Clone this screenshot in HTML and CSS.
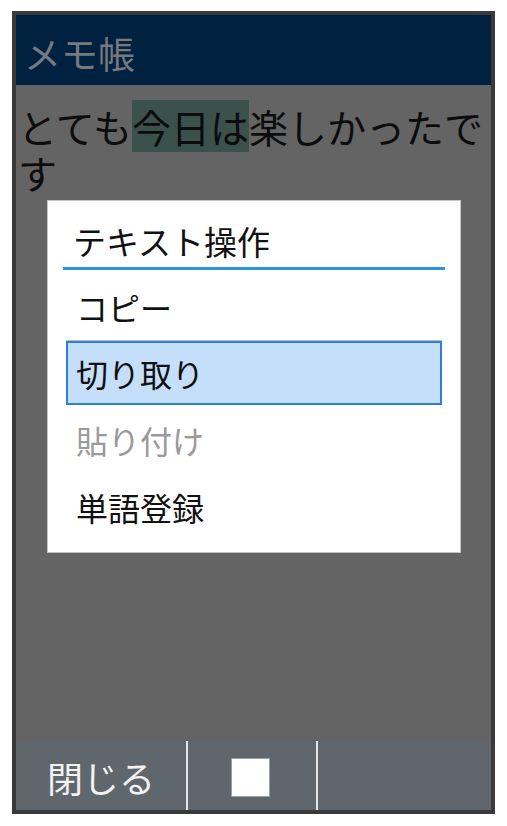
FILE: index.html
```html
<!DOCTYPE html>
<html lang="ja">
<head>
<meta charset="utf-8">
<link rel="stylesheet" href="styles.css">
</head>
<body>
<div class="phone">
  <header class="appbar">メモ帳</header>
  <main class="content">
    <p class="memo">とても<span class="sel">今日は</span>楽しかったです</p>
    <div class="dialog">
      <div class="dialog-title">テキスト操作</div>
      <ul class="menu">
        <li class="item sep">コピー</li>
        <li class="item focus">切り取り</li>
        <li class="item disabled">貼り付け</li>
        <li class="item">単語登録</li>
      </ul>
    </div>
  </main>
  <footer class="softkeys">
    <div class="key key-left">閉じる</div>
    <div class="key key-center"><span class="square"></span></div>
    <div class="key key-right"></div>
  </footer>
</div>
</body>
</html>
```

FILE: styles.css
```css
* { box-sizing: border-box; }
html, body { margin: 0; padding: 0; background: #ffffff; }
body {
  font-family: "Noto Sans CJK JP", "Noto Sans", sans-serif;
  padding: 11px 12px 0 12px;
}
.phone {
  width: 483px;
  height: 803px;
  border: 4px solid #3a3a3a;
  display: flex;
  flex-direction: column;
  background: #646464;
}
.appbar {
  height: 70px;
  background: #00213f;
  color: #767a7e;
  font-size: 37px;
  line-height: 70px;
  padding: 3px 0 0 8px;
  flex: none;
}
.content {
  flex: 1;
  position: relative;
  background: #646464;
}
.memo {
  margin: 0;
  padding: 18px 2px 0 2px;
  font-size: 39px;
  line-height: 46px;
  color: #0c0c0c;
}
.sel {
  display: inline-block;
  line-height: 52px;
  margin: -3px 0;
  background: #3b524c;
}
.dialog {
  position: absolute;
  left: 31px;
  top: 115px;
  width: 414px;
  height: 353px;
  background: #ffffff;
  border: 1px solid #c6c6c6;
  display: flex;
  flex-direction: column;
}
.dialog-title {
  margin: 0 15px;
  padding: 22px 0 8px 10px;
  font-size: 33px;
  line-height: 36px;
  color: #111;
  border-bottom: 3px solid #2993ec;
}
.menu {
  list-style: none;
  margin: 4px 18px 0 18px;
  padding: 0;
}
.item {
  height: 67px;
  line-height: 67px;
  font-size: 32px;
  color: #111;
  padding-left: 10px;
}
.item.sep {
  height: 67px;
  line-height: 66px;
  border-bottom: 1px solid #bdbdbd;
}
.item.focus {
  height: 64px;
  line-height: 60px;
  margin-bottom: 2px;
  background: #c5dffb;
  border: 2px solid #2a7fe0;
  padding-left: 8px;
}
.item.disabled { color: #9a9a9a; }
.softkeys {
  height: 69px;
  background: #5f666c;
  display: flex;
  flex: none;
}
.key {
  display: flex;
  align-items: center;
  justify-content: center;
  color: #f2f2f2;
  font-size: 36px;
}
.key-left { width: 172px; border-right: 2px solid #e6e6e6; padding-top: 2px; }
.key-center { width: 130px; border-right: 2px solid #e6e6e6; padding-right: 4px; }
.key-right { flex: 1; }
.square {
  width: 39px;
  height: 39px;
  background: #ffffff;
  border: 1px solid #9aa0a4;
  margin-top: 4px;
}
```
